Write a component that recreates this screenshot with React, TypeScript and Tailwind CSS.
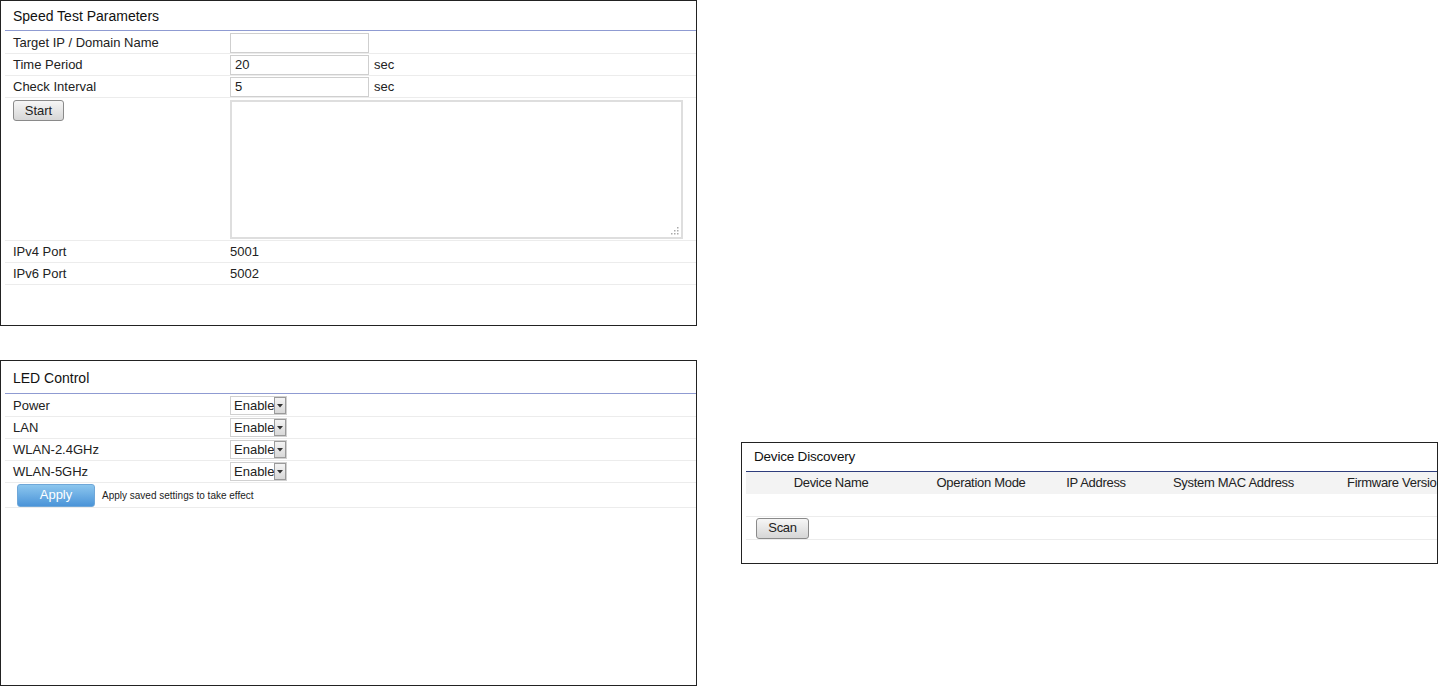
import React from "react";

const FONT = { fontFamily: '"Liberation Sans", Arial, sans-serif' };

function Row({
  label,
  children,
  className = "h-[22px]",
}: {
  label?: React.ReactNode;
  children?: React.ReactNode;
  className?: string;
}) {
  return (
    <div className={`flex items-center border-b border-[#ececec] ${className}`}>
      <div className="w-[225px] pl-[8px] text-[13px] text-[#222]">{label}</div>
      <div className="flex items-center text-[13px] text-[#222]">{children}</div>
    </div>
  );
}

function TextInput({ value = "" }: { value?: string }) {
  return (
    <div className="w-[139px] h-[20px] border border-[#cfcfcf] bg-white px-[4px] text-[13px] leading-[18px] text-[#222]">
      {value}
    </div>
  );
}

function GrayButton({ children, className = "" }: { children: React.ReactNode; className?: string }) {
  return (
    <div
      className={`flex items-center justify-center h-[21px] rounded-[3px] border border-[#8a8a8a] bg-gradient-to-b from-[#f6f6f6] to-[#d6d6d6] text-[13px] text-[#222] ${className}`}
    >
      {children}
    </div>
  );
}

function EnableSelect() {
  return (
    <div className="flex items-center h-[19px] w-[57px] border border-[#d0d0d0] bg-white">
      <span className="pl-[3px] text-[13px] leading-none text-[#222]">Enable</span>
      <div className="ml-auto h-[17px] w-[13px] border border-[#9a9a9a] bg-gradient-to-b from-[#f4f4f4] to-[#d8d8d8] flex items-center justify-center">
        <svg width="6" height="4" viewBox="0 0 6 4">
          <path d="M0 0 L6 0 L3 3.5 Z" fill="#333" />
        </svg>
      </div>
    </div>
  );
}

// dotted resize grip in the textarea corner
function Grip() {
  return (
    <svg className="absolute right-[4px] bottom-[4px]" width="8" height="8" viewBox="0 0 8 8">
      <rect x="6" y="0" width="1.5" height="1.5" fill="#aaa" />
      <rect x="3" y="3" width="1.5" height="1.5" fill="#aaa" />
      <rect x="6" y="3" width="1.5" height="1.5" fill="#aaa" />
      <rect x="0" y="6" width="1.5" height="1.5" fill="#aaa" />
      <rect x="3" y="6" width="1.5" height="1.5" fill="#aaa" />
      <rect x="6" y="6" width="1.5" height="1.5" fill="#aaa" />
    </svg>
  );
}

function SpeedTest() {
  return (
    <div className="w-[697px] h-[326px] border border-[#222] pl-[4px] bg-white">
      <div className="h-[29px] flex items-center pl-[8px] pt-[1px] text-[14px] text-[#111]">Speed Test Parameters</div>
      <div className="h-[1px] bg-[#8f9bd2]" />
      <div className="h-[1px]" />
      <Row label="Target IP / Domain Name">
        <TextInput />
      </Row>
      <Row label="Time Period">
        <TextInput value="20" />
        <span className="ml-[5px]">sec</span>
      </Row>
      <Row label="Check Interval">
        <TextInput value="5" />
        <span className="ml-[5px]">sec</span>
      </Row>
      <div className="flex items-start h-[143px] border-b border-[#ececec]">
        <div className="w-[225px] pl-[8px] pt-[2px]">
          <GrayButton className="w-[51px]">Start</GrayButton>
        </div>
        <div className="relative mt-[2px]">
          <textarea
            readOnly
            className="block w-[453px] h-[139px] border-2 border-[#dedede] bg-white outline-none resize-none"
          />
          <Grip />
        </div>
      </div>
      <Row label="IPv4 Port">5001</Row>
      <Row label="IPv6 Port">5002</Row>
    </div>
  );
}

function LedControl() {
  return (
    <div className="w-[697px] h-[326px] border border-[#222] pl-[4px] bg-white">
      <div className="h-[32px] flex items-center pl-[8px] pt-[2px] text-[14px] text-[#111]">LED Control</div>
      <div className="h-[1px] bg-[#8f9bd2]" />
      <div className="h-[1px]" />
      {["Power", "LAN", "WLAN-2.4GHz", "WLAN-5GHz"].map((l) => (
        <Row key={l} label={l}>
          <EnableSelect />
        </Row>
      ))}
      <div className="flex items-center h-[25px] border-b border-[#ececec]">
        <div className="ml-[12px] flex items-center justify-center w-[78px] h-[23px] rounded-[3px] border border-[#6fa7d8] bg-gradient-to-b from-[#8cc6ee] to-[#4a94d8] text-[13px] text-white">
          Apply
        </div>
        <span className="ml-[7px] text-[10px] text-[#222]">Apply saved settings to take effect</span>
      </div>
    </div>
  );
}

function DeviceDiscovery() {
  const cols = [
    { t: "Device Name", w: "w-[170px]" },
    { t: "Operation Mode", w: "w-[130px]" },
    { t: "IP Address", w: "w-[100px]" },
    { t: "System MAC Address", w: "w-[175px]" },
  ];
  return (
    <div className="w-[697px] h-[122px] border border-[#222] pl-[4px] bg-white">
      <div className="h-[28px] flex items-center pl-[8px] text-[13.5px] text-[#111] tracking-[-0.2px]">Device Discovery</div>
      <div className="h-[1px] bg-[#2e3d7c]" />
      <div className="flex items-center h-[22px] bg-[#f3f3f3] text-[13px] text-[#222] tracking-[-0.3px] whitespace-nowrap overflow-hidden">
        {cols.map((c) => (
          <div key={c.t} className={`${c.w} text-center shrink-0`}>
            {c.t}
          </div>
        ))}
        <div className="pl-[26px] shrink-0">Firmware Versio</div>
      </div>
      <div className="h-[23px] border-b border-[#ececec]" />
      <div className="flex items-center h-[23px] border-b border-[#ececec] pl-[10px]">
        <GrayButton className="w-[53px] h-[20px] tracking-[-0.3px]">Scan</GrayButton>
      </div>
    </div>
  );
}

export default function App() {
  return (
    <div className="w-[1438px] h-[686px] bg-white overflow-hidden flex" style={FONT}>
      <div className="flex flex-col gap-[34px] w-[697px] shrink-0">
        <SpeedTest />
        <LedControl />
      </div>
      <div className="ml-[44px] mt-[442px]">
        <DeviceDiscovery />
      </div>
    </div>
  );
}
